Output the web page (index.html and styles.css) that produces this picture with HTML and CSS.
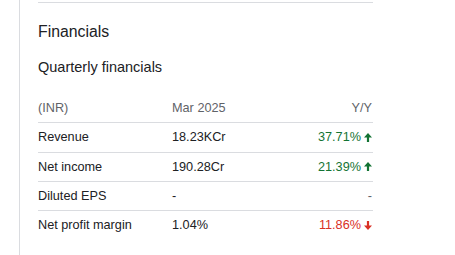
FILE: index.html
```html
<!DOCTYPE html>
<html lang="en">
<head>
<meta charset="utf-8">
<title>Financials</title>
<link rel="stylesheet" href="styles.css">
</head>
<body>
<div class="frame">
  <div class="rail">
    <section class="card">
      <div class="divider"></div>
      <h2 class="title">Financials</h2>
      <h3 class="subtitle">Quarterly financials</h3>
      <div class="table">
        <div class="row head">
          <span>(INR)</span>
          <span>Mar 2025</span>
          <span class="yy">Y/Y</span>
        </div>
        <div class="row">
          <span>Revenue</span>
          <span>18.23KCr</span>
          <span class="yy up">37.71%<svg class="arrow" viewBox="0 0 8 9" width="8" height="9"><path d="M4 0L8 4.6H5.1V9H2.9V4.6H0Z"/></svg></span>
        </div>
        <div class="row">
          <span>Net income</span>
          <span>190.28Cr</span>
          <span class="yy up">21.39%<svg class="arrow" viewBox="0 0 8 9" width="8" height="9"><path d="M4 0L8 4.6H5.1V9H2.9V4.6H0Z"/></svg></span>
        </div>
        <div class="row">
          <span>Diluted EPS</span>
          <span>-</span>
          <span class="yy muted">-</span>
        </div>
        <div class="row last">
          <span>Net profit margin</span>
          <span>1.04%</span>
          <span class="yy down">11.86%<svg class="arrow" viewBox="0 0 8 9" width="8" height="9"><path d="M4 9L8 4.4H5.1V0H2.9V4.4H0Z"/></svg></span>
        </div>
      </div>
    </section>
  </div>
</div>
</body>
</html>
```

FILE: styles.css
```css
html, body {
  margin: 0;
  padding: 0;
  background: #ffffff;
}

body {
  font-family: Arial, "Liberation Sans", sans-serif;
  color: #202124;
}

.frame {
  display: flex;
  height: 255px;
  overflow: hidden;
}

.rail {
  margin-left: 19px;
  border-left: 1px solid #dadce0;
  display: flex;
}

.card {
  margin-left: 18px;
  width: 335px;
  padding-top: 2px;
}

.divider {
  height: 0;
  border-top: 1px solid #dadce0;
}

.title {
  margin: 19px 0 0;
  font-size: 15.8px;
  line-height: 20px;
  font-weight: 400;
  color: #202124;
}

.subtitle {
  margin: 15px 0 0;
  font-size: 14.5px;
  line-height: 20px;
  font-weight: 400;
  color: #202124;
}

.table {
  margin-top: 17px;
  font-size: 12.7px;
}

.row {
  display: grid;
  grid-template-columns: 134px 1fr 1fr;
  align-items: center;
  height: 28.3px;
  border-bottom: 1px solid #dadce0;
  color: #202124;
}

.row.last {
  border-bottom: 0;
}

.row.head {
  color: #5f6368;
}

.yy {
  display: flex;
  justify-content: flex-end;
  align-items: center;
  gap: 3px;
  padding-right: 1px;
}

.up {
  color: #137333;
}

.down {
  color: #d93025;
}

.muted {
  color: #5f6368;
}

.arrow {
  fill: currentColor;
  display: block;
}
```
